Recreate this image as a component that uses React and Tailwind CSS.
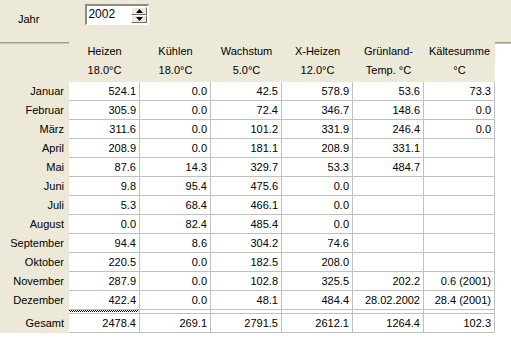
import React from 'react';

const cols = [
  ['Heizen', '18.0°C'],
  ['Kühlen', '18.0°C'],
  ['Wachstum', '5.0°C'],
  ['X-Heizen', '12.0°C'],
  ['Grünland-', 'Temp. °C'],
  ['Kältesumme', '°C'],
];

const rows = [
  ['Januar', '524.1', '0.0', '42.5', '578.9', '53.6', '73.3'],
  ['Februar', '305.9', '0.0', '72.4', '346.7', '148.6', '0.0'],
  ['März', '311.6', '0.0', '101.2', '331.9', '246.4', '0.0'],
  ['April', '208.9', '0.0', '181.1', '208.9', '331.1', ''],
  ['Mai', '87.6', '14.3', '329.7', '53.3', '484.7', ''],
  ['Juni', '9.8', '95.4', '475.6', '0.0', '', ''],
  ['Juli', '5.3', '68.4', '466.1', '0.0', '', ''],
  ['August', '0.0', '82.4', '485.4', '0.0', '', ''],
  ['September', '94.4', '8.6', '304.2', '74.6', '', ''],
  ['Oktober', '220.5', '0.0', '182.5', '208.0', '', ''],
  ['November', '287.9', '0.0', '102.8', '325.5', '202.2', '0.6 (2001)'],
  ['Dezember', '422.4', '0.0', '48.1', '484.4', '28.02.2002', '28.4 (2001)'],
];

const total = ['Gesamt', '2478.4', '269.1', '2791.5', '2612.1', '1264.4', '102.3'];

function Row({ r }) {
  return (
    <div className="flex h-[19px]">
      <div className="w-[69px] bg-[#ece9d8] text-right pr-[5px] leading-[18px]">{r[0]}</div>
      {r.slice(1).map((v, i) => (
        <div key={i} className="w-[71px] bg-white border-r border-b border-[#c0c0c0] text-right pr-[3px] leading-[18px]">
          {v}
        </div>
      ))}
    </div>
  );
}

export default function App() {
  return (
    <div className="w-[511px] h-[345px] bg-white text-[11px] text-black overflow-hidden" style={{ fontFamily: '"Liberation Sans", Arial, sans-serif' }}>
      {/* Kopfbereich mit Jahr */}
      <div className="h-[42px] bg-[#ece9d8] flex items-start">
        <div className="ml-[18px] mt-[11px]">Jahr</div>
        <div className="ml-[46px] mt-[4px] w-[64px] h-[21px] flex bg-white border-t-2 border-l-2 border-t-[#8f8c80] border-l-[#8f8c80] border-r border-b border-r-white border-b-white">
          <div className="flex-1 pl-[1px] leading-[16px] text-[12px]">2002</div>
          <div className="w-[16px] flex flex-col my-[1px] mr-[1px]">
            <div className="flex-1 bg-[#ece9d8] border border-t-white border-l-white border-r-[#716f64] border-b-[#716f64] flex items-center justify-center">
              <svg width="7" height="4" viewBox="0 0 7 4"><path d="M3.5 0L7 4H0z" fill="#000" /></svg>
            </div>
            <div className="flex-1 bg-[#ece9d8] border border-t-white border-l-white border-r-[#716f64] border-b-[#716f64] flex items-center justify-center">
              <svg width="7" height="4" viewBox="0 0 7 4"><path d="M0 0H7L3.5 4z" fill="#000" /></svg>
            </div>
          </div>
        </div>
      </div>
      <div className="h-[1px] bg-[#9d9a8c]" />
      <div className="h-[1px] bg-[#c9c6b8]" />

      {/* Spaltenkoepfe */}
      <div className="flex h-[38px]">
        <div className="w-[69px] bg-[#ece9d8]" />
        {cols.map((c, i) => (
          <div key={i} className="w-[71px] bg-[#ece9d8] text-center leading-[19px] -mt-[2px]">
            <div>{c[0]}</div>
            <div>{c[1]}</div>
          </div>
        ))}
      </div>

      {rows.map((r, i) => (
        <Row key={i} r={r} />
      ))}

      {/* Trennlinie vor Gesamt */}
      <div className="flex h-[4px]">
        <div className="w-[69px] bg-[#ece9d8]" />
        {cols.map((c, i) => (
          <div key={i} className="w-[71px] bg-white border-r border-b border-[#c0c0c0]">
            {i === 0 && (
              <div className="mr-[1px]">
                <div className="h-[1px] bg-[repeating-linear-gradient(90deg,#000_0_1px,transparent_1px_2px)]" />
                <div className="h-[1px] bg-[repeating-linear-gradient(90deg,transparent_0_1px,#000_1px_2px)]" />
              </div>
            )}
          </div>
        ))}
      </div>
      <Row r={total} />
    </div>
  );
}
